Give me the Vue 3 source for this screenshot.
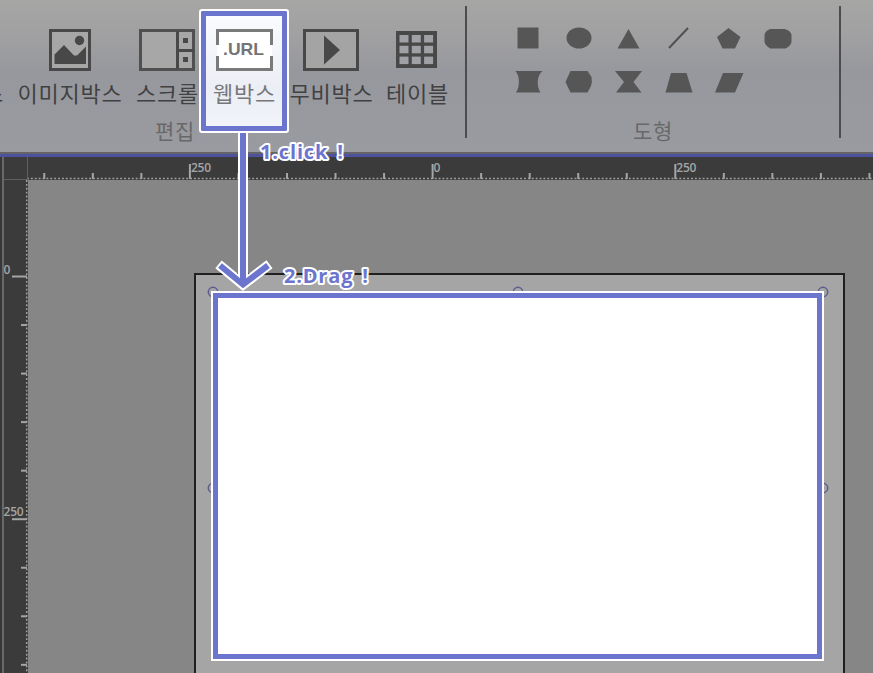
<script setup>
const majors = [{ n: '250', v: -250 }, { n: '0', v: 0 }, { n: '250', v: 250 }]
const scale = 0.9708
const hx = v => 432.6 - 28 + v * scale
const vy = v => 276.5 - 180 + v * scale
const hMinor = Array.from({ length: 18 }, (_, i) => (i - 8) * 50).filter(v => v % 250)
const vMinor = Array.from({ length: 8 }, (_, i) => (i + 1) * 50).filter(v => v % 250)
</script>

<template>
  <main class="editor">
    <header class="ribbon">
      <section class="edit">
        <div class="tools">
          <div class="tool cut"><i class="space"></i><span>스</span></div>
          <div class="tool image">
            <svg width="42" height="42"><path d="M1.5 1.5h39v39h-39z" fill="#a7a7a8" stroke="#484848" stroke-width="3"/><circle cx="30.5" cy="11.5" r="4.7"/><path d="M5.5 35V25.500L15 16l10 10.500h3l9-9V35z"/></svg>
            <span>이미지박스</span>
          </div>
          <div class="tool scroll">
            <svg width="57" height="42"><path d="M1.5 1.5h53v39h-53z" fill="#a7a7a8" stroke="#505050" stroke-width="3"/><path d="M37 2h3v38h-3zM40 20h15v3H40zM44 9h5v5h-5zM44 28h5v5h-5z"/></svg>
            <span>스크롤</span>
          </div>
          <div class="tool web">
            <div class="focus"></div>
            <svg width="57" height="42"><path d="M1 1h55v40H1z" fill="#fff"/><path d="M1.5 16V1.5h54V16M1.5 27v13.5h54V27" fill="none" stroke="#7a7a7b" stroke-width="3"/><text x="7" y="26" textLength="41" lengthAdjust="spacingAndGlyphs">.URL</text></svg>
            <span>웹박스</span>
          </div>
          <div class="tool movie">
            <svg width="58" height="42"><path d="M1.5 1.5h53v39h-53z" fill="#a4a4a5" stroke="#484848" stroke-width="3"/><path d="M21 6.500l16 14.500-16 14.500z"/></svg>
            <span>무비박스</span>
          </div>
          <div class="tool table">
            <svg width="43" height="42"><path d="M0 2h41v37H0z" fill="#484848"/><path v-for="n in 9" :key="n" :d="`M${3.5 + ((n-1)%3)*12.3} ${6 + Math.floor((n-1)/3)*10.8}h9v7.5h-9z`" fill="#a0a1a4"/></svg>
            <span>테이블</span>
          </div>
        </div>
        <p class="group">편집</p>
      </section>
      <section class="shapes">
        <div class="shape-grid">
          <svg viewBox="0 0 28 24"><path d="M3.5 2.5h21v21h-21z"/></svg>
          <svg viewBox="0 0 28 24"><ellipse cx="15" cy="13" rx="12.5" ry="10.5"/></svg>
          <svg viewBox="0 0 28 24"><path d="M14.5 4l11 19.5h-22z"/></svg>
          <svg viewBox="0 0 28 24"><path d="M5 23L24 3" stroke="#505050" stroke-width="2"/></svg>
          <svg viewBox="0 0 28 24"><path d="M14.5 3L26.5 12 21 23.5H8.5L3 12z"/></svg>
          <svg viewBox="0 0 28 24"><path d="M6 4h15q6 2 6.500 6v7q-1 4-6 6.500H6Q1 20 .5 17v-7Q1 6 6 4z"/></svg>
          <svg viewBox="0 0 28 24"><path d="M1.5 2h27c-6 5-6 15-2 21.5H2C6 18 6 7 1.5 2z"/></svg>
          <svg viewBox="0 0 28 24"><path d="M6.500 2h17l4 6q1 5-.5 9l-3.500 6.500h-17L1.500 13z"/></svg>
          <svg viewBox="0 0 28 24"><path d="M1 2h27L19.500 13 27.500 23.500H2L10 13z"/></svg>
          <svg viewBox="0 0 28 24"><path d="M7 4h15.500l6 19.500h-27z"/></svg>
          <svg viewBox="0 0 28 24"><path d="M9 4h20.500l-8.500 19.500H1z"/></svg>
        </div>
        <p class="group">도형</p>
      </section>
    </header>

    <div class="workspace">
      <div class="edge"></div>
      <div class="corner"></div>
      <svg class="hruler" width="845" height="23">
        <path d="M0 21.500H845" stroke="#a0a0a0" stroke-width="1.500" stroke-dasharray="1.900 1.983" stroke-dashoffset="1"/>
        <path v-for="v in hMinor" :key="v" :d="`M${hx(v)} 16v6`" class="tick"/>
        <g v-for="m in majors" :key="m.v"><path :d="`M${hx(m.v)} 7v15`" class="tick"/><text :x="hx(m.v) + 1" y="14.500">{{ m.n }}</text></g>
      </svg>
      <svg class="vruler" width="24" height="494">
        <path d="M22.700 0V494" stroke="#a0a0a0" stroke-width="1.500" stroke-dasharray="1.900 1.983"/>
        <path v-for="v in vMinor" :key="v" :d="`M17 ${vy(v)}h6`" class="tick"/>
        <g v-for="m in majors.slice(1)" :key="m.v"><path :d="`M8 ${vy(m.v)}h15`" class="tick"/><text x="-0.500" :y="vy(m.v) - 3">{{ m.n }}</text></g>
      </svg>
      <div class="canvas">
        <div class="page">
          <svg class="handles" width="648" height="399"><g fill="none" stroke="#5c5c91" stroke-width="1.500"><circle v-for="p in [[18,18],[323,18],[628,18],[18,214],[628,214]]" :key="p.join()" :cx="p[0]" :cy="p[1]" r="4.700"/></g></svg>
          <div class="web-frame"></div>
        </div>
      </div>
    </div>

    <svg class="notes" width="873" height="673">
      <path d="M243 133V283M218.500 264.300l24.500 20.200 26.500-20.200" class="halo"/>
      <path d="M243 133V283M220 265.500l23 19 25-19" class="arrow"/>
      <text x="260" y="158.500" textLength="83">1.click !</text>
      <text x="284" y="283" textLength="84">2.Drag !</text>
    </svg>
  </main>
</template>

<style>
body { margin: 0; overflow: hidden; }
</style>
<style scoped>
.editor { position: relative; width: 873px; height: 673px; overflow: hidden; background: #868686; font-family: "Noto Sans CJK KR", sans-serif; }
.ribbon { display: flex; box-sizing: border-box; height: 157px; border-bottom: 3px solid #4e519c; background: linear-gradient(#a6a6a5 0, #a0a0a2 38px, #97989d 70px, #999ba0 152px, #646468 152px); }
.edit { box-sizing: border-box; width: 467px; height: 132px; margin-top: 6px; border-right: 2px solid #4c4c4e; }
.tools { display: flex; gap: 14px; margin-left: -17px; padding-top: 23px; height: 87px; }
.tool { position: relative; display: flex; flex: none; flex-direction: column; align-items: center; width: 63px; }
.tool svg, .space { display: block; flex: none; height: 42px; fill: #484848; }
.tool span { margin-top: 6px; line-height: 30px; font-size: 22px; letter-spacing: .8px; white-space: nowrap; color: #414142; }
.cut { width: 21px; }
.image { width: 104px; }
.movie { width: 83px; }
.table { margin-left: -1px; }
.web { z-index: 2; isolation: isolate; }
.web span { color: #77777a; }
.web text { font: 700 17px "Liberation Sans", sans-serif; fill: #747476; }
.focus { position: absolute; z-index: -1; left: -14px; top: -20px; box-sizing: border-box; width: 90px; height: 124px; border: 2px solid #fff; border-radius: 3px; background: linear-gradient(#fbfcfe, #eceef5 65%, #f1f4f9); box-shadow: inset 0 0 0 5px #6c75ce; }
.group { margin: 0; line-height: 28px; font-size: 21px; letter-spacing: .8px; color: #68686a; }
.edit .group { padding-left: 155px; }
.shapes { box-sizing: border-box; width: 374px; height: 132px; margin-top: 6px; border-right: 2px solid #4c4c4e; }
.shape-grid { display: grid; grid-template-columns: repeat(6, 28px); grid-auto-rows: 24px; align-content: start; gap: 20px 22px; height: 90px; padding: 19px 0 0 47px; box-sizing: border-box; }
.shape-grid svg { width: 28px; height: 24px; overflow: visible; fill: #565656; }
.shapes .group { padding-top: 20px; text-align: center; }
.workspace { display: grid; grid-template: 23px 493px / 4px 24px 845px; }
.edge { grid-row: 1 / 3; background: linear-gradient(90deg, #383838 2px, #696969 2px); }
.corner { border: solid #606060; border-width: 0 1px 1px 0; background: #3b3b3b; }
.hruler, .vruler { display: block; background: #3b3b3b; }
.hruler text, .vruler text { font: 600 12px "Open Sans", sans-serif; letter-spacing: -.2px; fill: #a5a5a5; }
.tick { stroke: #a5a5a5; stroke-width: 2; }
.canvas { overflow: hidden; padding: 93px 0 0 166px; }
.page { position: relative; box-sizing: border-box; width: 651px; height: 402px; padding: 16px 0 0 15px; border: solid #202020; border-width: 2px 2px 0; background: #a5a5a5; }
.handles { position: absolute; left: -1px; top: -1px; }
.web-frame { position: relative; box-sizing: border-box; width: 613px; height: 370px; border: 2px solid #fff; box-shadow: inset 0 0 0 5px #6c75ce; background: #fff; }
.notes { position: absolute; inset: 0; z-index: 3; pointer-events: none; }
.notes path { fill: none; }
.halo { stroke: #fff; stroke-width: 10; }
.arrow { stroke: #6c75ce; stroke-width: 6; }
.notes text { font: 700 20px "Open Sans", sans-serif; word-spacing: 3px; fill: #6c75ce; stroke: #fff; stroke-width: 4px; stroke-linejoin: round; paint-order: stroke; }
</style>
